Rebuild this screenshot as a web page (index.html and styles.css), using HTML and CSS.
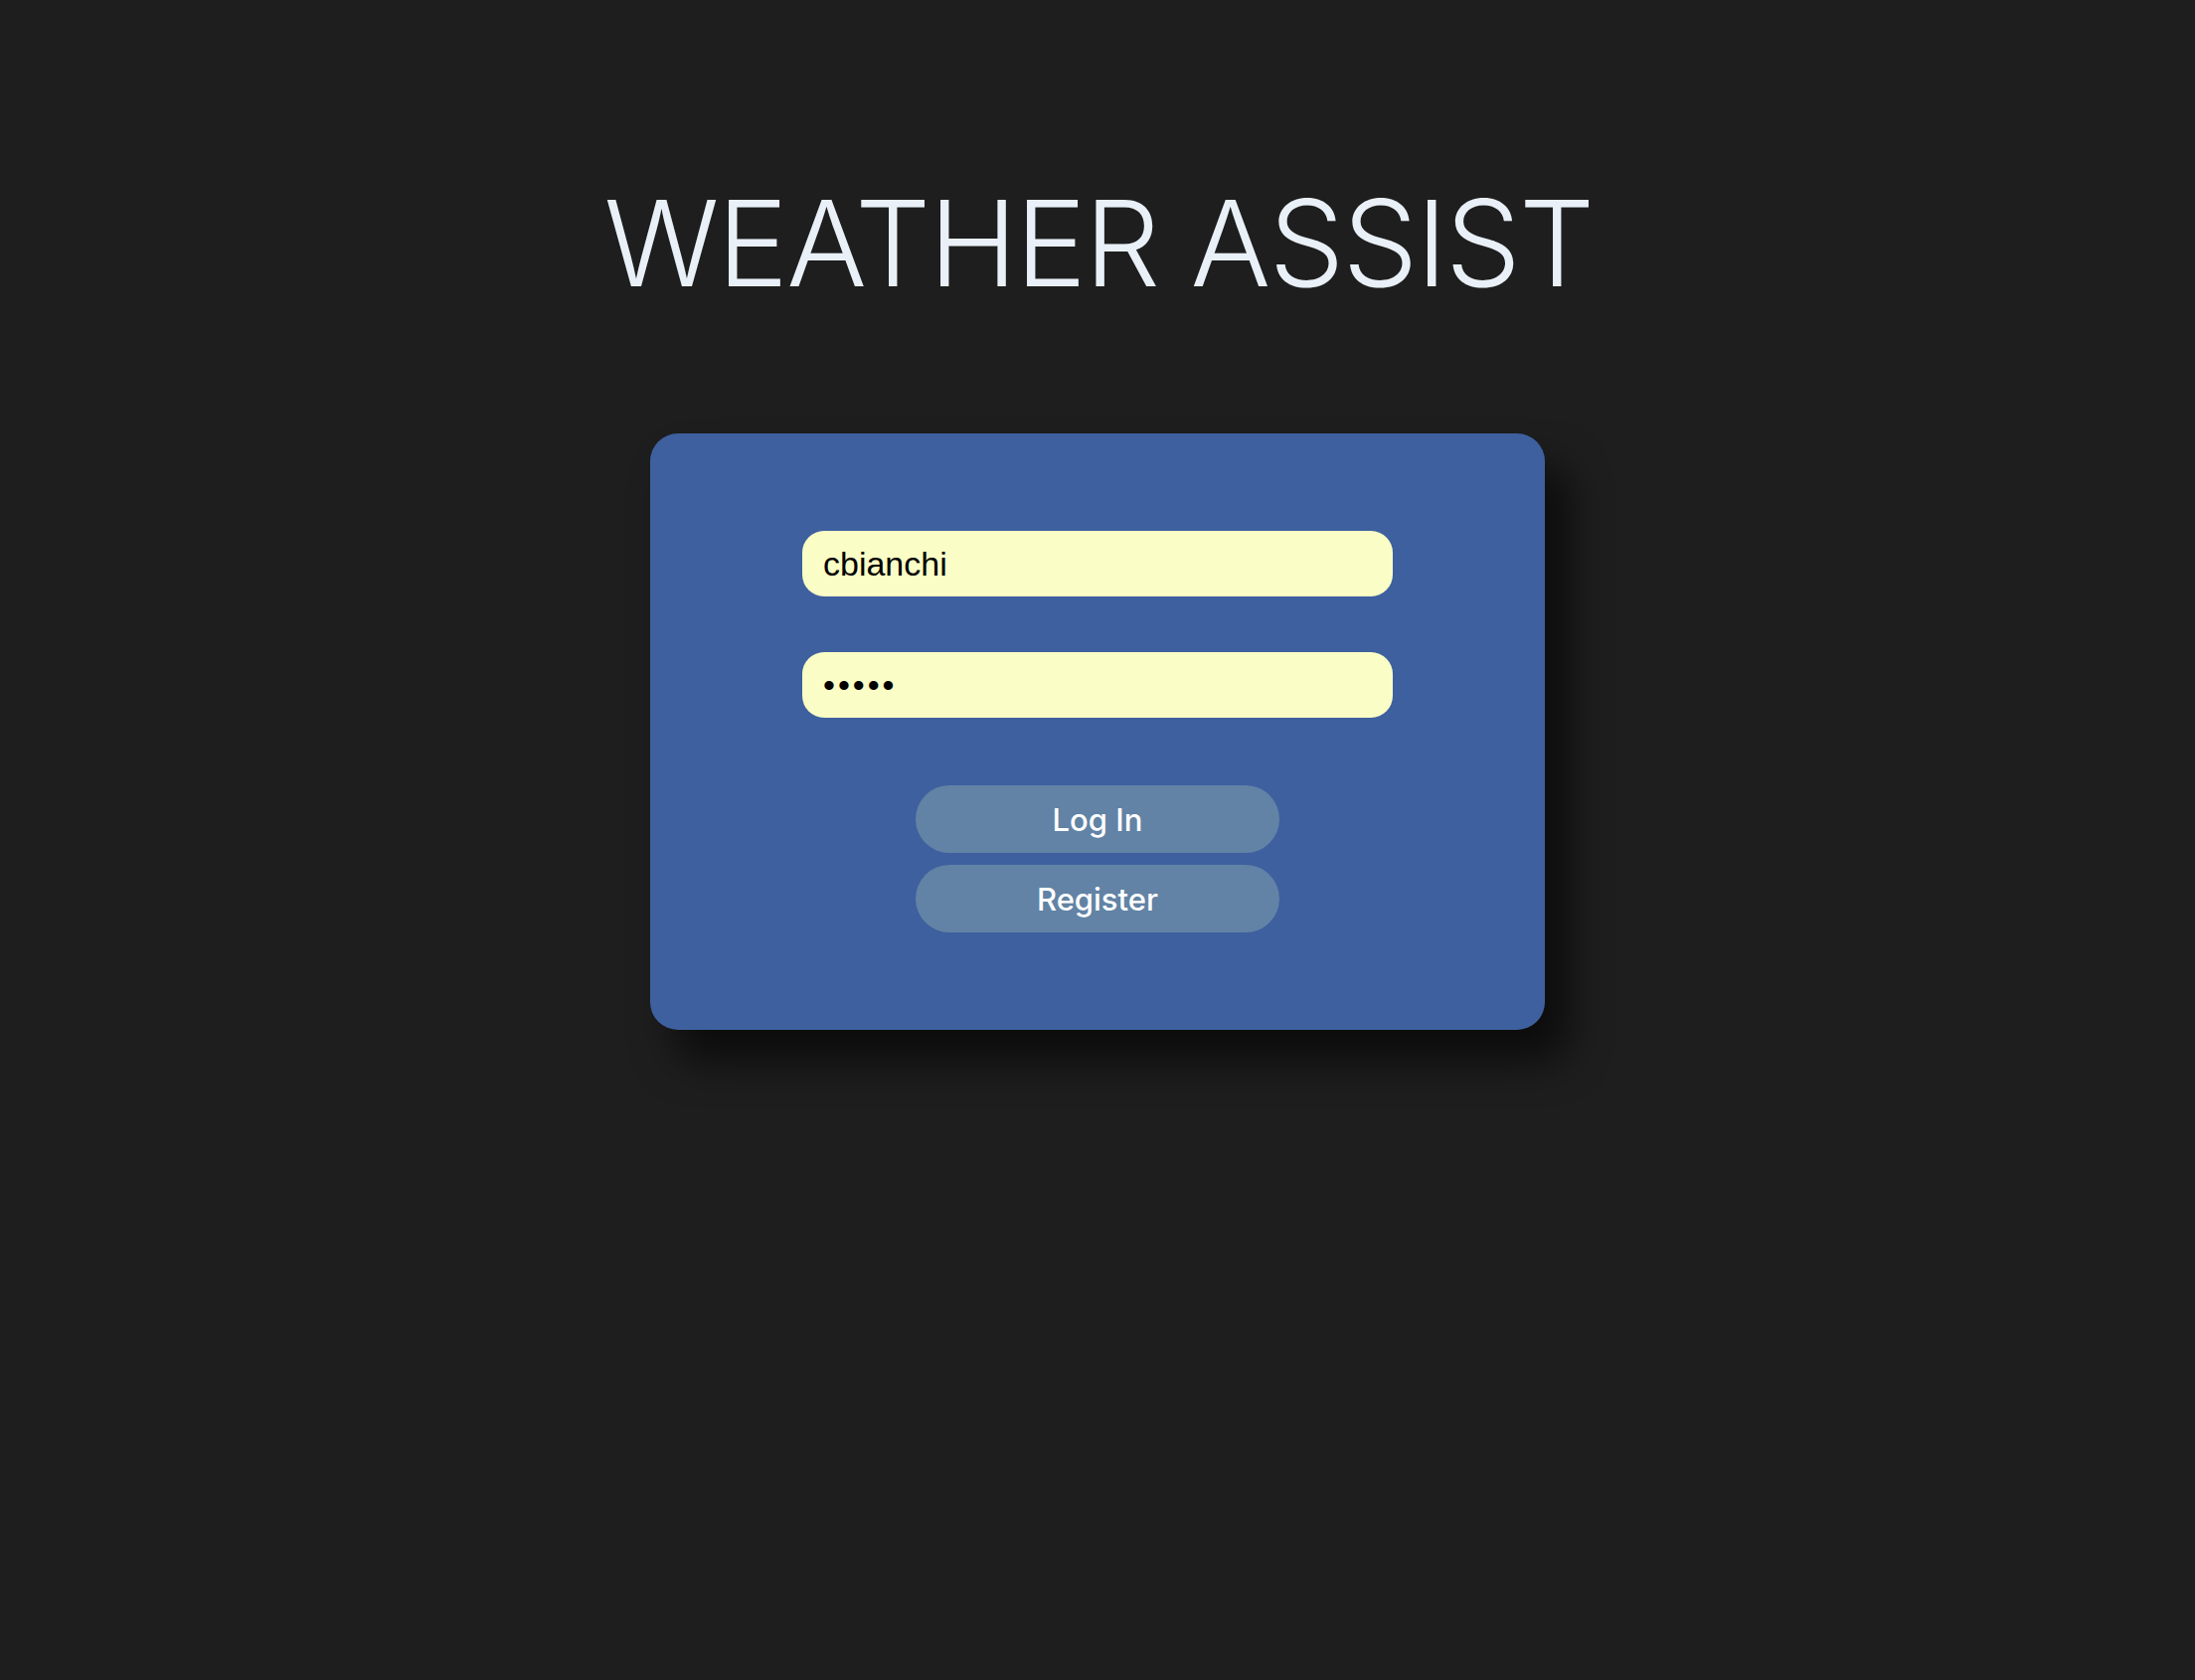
FILE: index.html
```html
<!DOCTYPE html>
<html lang="en">
<head>
<meta charset="utf-8">
<title>Weather Assist</title>
<link rel="stylesheet" href="styles.css">
</head>
<body>
<main class="page">
  <h1 class="title">WEATHER ASSIST</h1>
  <form class="card">
    <input class="field" type="text" value="cbianchi" aria-label="Username">
    <input class="field field-pass" type="password" value="12345" aria-label="Password">
    <div class="actions">
      <button class="btn" type="button">Log In</button>
      <button class="btn" type="button">Register</button>
    </div>
  </form>
</main>
</body>
</html>
```

FILE: styles.css
```css
html, body {
  margin: 0;
  padding: 0;
  background: #1e1e1e;
  height: 100%;
}

.page {
  display: flex;
  flex-direction: column;
  align-items: center;
  min-height: 100%;
}

.title {
  margin: 0;
  padding-top: 175px;
  padding-left: 2px;
  font-family: "Inter", "Liberation Sans", sans-serif;
  font-weight: 300;
  font-size: 120px;
  line-height: 140px;
  color: #e9f0f7;
  letter-spacing: -1.8px;
}

.card {
  margin-top: 121px;
  box-sizing: border-box;
  width: 900px;
  height: 600px;
  padding-top: 98px;
  background: #3e609f;
  border-radius: 28px;
  box-shadow: 24px 32px 40px rgba(0, 0, 0, 0.6);
  display: flex;
  flex-direction: column;
  align-items: center;
}

.field {
  box-sizing: border-box;
  width: 594px;
  height: 66px;
  margin: 0 0 56px 0;
  padding: 0 20px 0 21px;
  border: none;
  outline: none;
  border-radius: 22px;
  background: #fafdc5;
  color: #000;
  font-family: "Liberation Sans", Arial, sans-serif;
  font-size: 34px;
}

.field-pass {
  margin-bottom: 68px;
  letter-spacing: 3px;
}

.actions {
  display: flex;
  flex-direction: column;
  gap: 12px;
}

.btn {
  width: 366px;
  height: 68px;
  border: none;
  border-radius: 34px;
  background: #6283a5;
  color: #ffffff;
  font-family: "Inter", "Liberation Sans", sans-serif;
  font-size: 31px;
  font-weight: 500;
  padding: 0;
  cursor: pointer;
}
```
